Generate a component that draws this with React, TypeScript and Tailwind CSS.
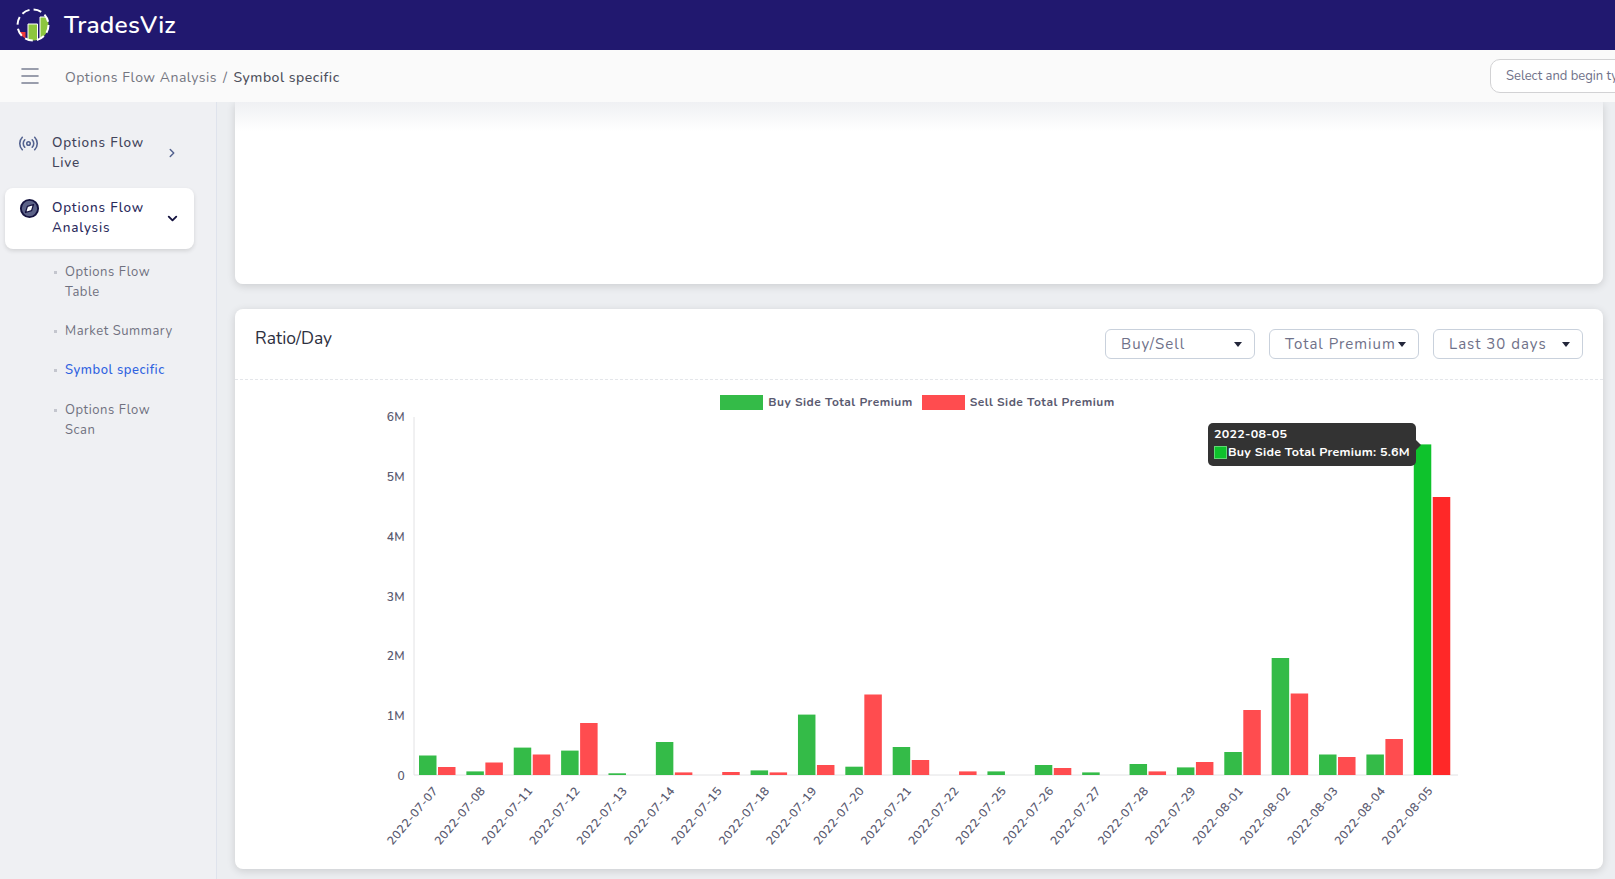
import { ChevronDown, ChevronRight, Menu, Radio } from "lucide-react";

const BASE_Y = 365;
const AXIS_X = 179;
const STEP_X = 47.37;

const rows: [string, number, number][] = [
  ["2022-07-07", 19.5, 8],
  ["2022-07-08", 3.6, 12.5],
  ["2022-07-11", 27.4, 20.5],
  ["2022-07-12", 24.4, 52],
  ["2022-07-13", 1.7, 0],
  ["2022-07-14", 33, 2.6],
  ["2022-07-15", 0, 3],
  ["2022-07-18", 4.6, 2.6],
  ["2022-07-19", 60.4, 10],
  ["2022-07-20", 8.3, 80.5],
  ["2022-07-21", 28, 15],
  ["2022-07-22", 0, 3.6],
  ["2022-07-25", 3.6, 0],
  ["2022-07-26", 10, 7],
  ["2022-07-27", 2.6, 0],
  ["2022-07-28", 11, 3.6],
  ["2022-07-29", 7.6, 13],
  ["2022-08-01", 23, 65],
  ["2022-08-02", 117, 81.5],
  ["2022-08-03", 20.5, 18],
  ["2022-08-04", 20.5, 36],
  ["2022-08-05", 330.6, 278],
];

const ticks = ["0", "1M", "2M", "3M", "4M", "5M", "6M"];

const font = { fontFamily: 'Nunito, Lato, "Noto Sans", sans-serif' };

const Logo = () => (
  <svg width="36" height="36" viewBox="0 0 36 36" className="shrink-0">
    <defs>
      <clipPath id="logo-clip">
        <circle cx="17" cy="18" r="15.5" />
      </clipPath>
    </defs>
    <g clipPath="url(#logo-clip)">
      <path d="M3 25h6.5v10H3z" fill="#ee3b3b" />
      <path d="M12 17h9.5v18H12z" fill="#8dc63f" stroke="#fff" strokeWidth="1" />
      <path d="M24 10h12v25H24z" fill="#8dc63f" stroke="#fff" strokeWidth="1" />
    </g>
    <circle cx="17" cy="18" r="15.5" fill="none" stroke="#fff" strokeWidth="2" strokeDasharray="8 4.2" />
  </svg>
);

const CompassIcon = () => (
  <svg width="21" height="21" viewBox="0 0 20 20" className="shrink-0">
    <circle cx="10" cy="10" r="8.2" fill="#5c6288" stroke="#14123f" strokeWidth="1.8" />
    <path d="M13.8 6.2l-1.8 5.8-5.8 1.8 1.8-5.8z" fill="#fff" stroke="#14123f" strokeWidth="1.2" strokeLinejoin="round" />
  </svg>
);

const Caret = () => (
  <span className="w-0 h-0 border-x-[4px] border-x-transparent border-t-[5px] border-t-[#23263a]" />
);

const Dropdown = ({ label }: { label: string }) => (
  <div className="h-[30px] w-[150px] flex items-center justify-between pl-[15px] pr-[12px] border border-[#c9d1dc] rounded-md text-[15px] tracking-[1px] text-[#6f7189] bg-white">
    <span className="whitespace-nowrap">{label}</span>
    <Caret />
  </div>
);

const SubItem = ({ label, active }: { label: string; active?: boolean }) => (
  <div className="flex pl-[54px] py-[9.7px]">
    <span className="w-[3px] h-[3px] mt-[9px] bg-[#c4c6ce] shrink-0" />
    <span
      className={`ml-2 w-[112px] text-[13px] leading-[20px] tracking-[0.55px] ${
        active ? "text-[#2e62e0] font-medium" : "text-[#6f7180]"
      }`}
    >
      {label}
    </span>
  </div>
);

const Chart = () => (
  <svg width="1368" height="460" className="block" style={font}>
    <line x1={AXIS_X} y1="7" x2={AXIS_X} y2={BASE_Y} stroke="#e2e2e4" />
    <line x1={AXIS_X} y1={BASE_Y} x2={AXIS_X + 1044} y2={BASE_Y} stroke="#e2e2e4" />
    {ticks.map((t, i) => (
      <text
        key={t}
        x="170"
        y={BASE_Y - i * 59.7 + 4.6}
        textAnchor="end"
        fontSize="12"
        fontWeight="600"
        letterSpacing="0.4"
        fill="#5a5a70"
      >
        {t}
      </text>
    ))}
    {rows.map(([date, buy, sell], i) => {
      const left = AXIS_X + 5 + i * STEP_X;
      const last = i === rows.length - 1;
      return (
        <g key={date}>
          {buy > 0 && (
            <rect x={left} y={BASE_Y - buy} width="17.5" height={buy} fill={last ? "#0ec22c" : "#34bb48"} />
          )}
          {sell > 0 && (
            <rect x={left + 19} y={BASE_Y - sell} width="17.5" height={sell} fill={last ? "#ff2828" : "#ff4c4f"} />
          )}
          <text
            transform={`translate(${left + 19.5} ${BASE_Y + 16}) rotate(-50)`}
            textAnchor="end"
            fontSize="12"
            fontWeight="600"
            letterSpacing="0.35"
            fill="#5a5a70"
          >
            {date}
          </text>
        </g>
      );
    })}
  </svg>
);

export default function App() {
  return (
    <div className="h-screen w-full flex flex-col overflow-hidden bg-[#eceef1]" style={font}>
      <div className="h-[50px] shrink-0 bg-[#21186f] flex items-center pl-[16px]">
        <Logo />
        <span className="ml-[12px] text-[24.5px] font-semibold text-white tracking-[0.2px]">TradesViz</span>
      </div>

      <div className="h-[52px] shrink-0 bg-[#fafafa] flex items-center pl-[18px] text-[14px] tracking-[0.5px] z-10">
        <Menu size={24} strokeWidth={1.6} className="text-[#7a7f92]" />
        <span className="ml-[23px] mt-[2px] text-[#73757f]">Options Flow Analysis</span>
        <span className="mx-[6px] mt-[2px] text-[#73757f]">/</span>
        <span className="mt-[2px] text-[#4d505c] font-medium">Symbol specific</span>
        <div className="ml-auto mr-[-60px] w-[185px] h-[34px] shrink-0 flex items-center pl-[15px] bg-white border border-[#d2d2d4] rounded-[10px] text-[13px] tracking-[0px] text-[#6f7189] whitespace-nowrap">
          <span className="mt-[1px]">Select and begin typing</span>
        </div>
      </div>

      <div className="flex-1 flex min-h-0">
        <aside className="w-[217px] shrink-0 bg-[#eff0f3] border-r border-[#dfe3ec] pt-[31px]">
          <div className="flex items-center pl-[18px] pr-[37px] h-[40px] text-[13.5px] leading-[20px] tracking-[0.8px] text-[#42445a]">
            <Radio size={21} strokeWidth={1.8} className="text-[#53628f] shrink-0 -mt-5" />
            <span className="ml-[13px] w-[95px] font-medium">Options Flow Live</span>
            <ChevronRight size={14} strokeWidth={2.5} className="ml-auto text-[#53628f]" />
          </div>
          <div className="mt-[15px] mx-[5px] w-[189px] h-[61px] bg-white rounded-lg shadow-[0_2px_4px_rgba(0,0,0,0.12)] flex items-center pl-[14px] pr-[14px] text-[13.5px] leading-[20px] tracking-[0.8px] text-[#2b2b5c]">
            <span className="-mt-5">
              <CompassIcon />
            </span>
            <span className="ml-[12px] w-[95px] font-medium -mt-[1px]">Options Flow Analysis</span>
            <ChevronDown size={15} strokeWidth={3} className="ml-auto text-[#14123f]" />
          </div>
          <div className="mt-[3px]">
            <SubItem label="Options Flow Table" />
            <SubItem label="Market Summary" />
            <SubItem label="Symbol specific" active />
            <SubItem label="Options Flow Scan" />
          </div>
        </aside>

        <main className="flex-1 min-w-0 pl-[18px] pr-[12px] flex flex-col gap-[25px]">
          <div className="h-[182px] shrink-0 rounded-b-lg bg-gradient-to-b from-[#eff0f3] to-white to-[16%] shadow-[0_2px_8px_rgba(0,0,0,0.14)]" />

          <div className="h-[560px] shrink-0 bg-white rounded-lg shadow-[0_2px_8px_rgba(0,0,0,0.14)] flex flex-col">
            <div className="h-[71px] shrink-0 flex justify-between pl-[20px] pr-[20px] pt-[20px] border-b border-dashed border-[#e4e6ea]">
              <h3 className="text-[17.5px] leading-[20px] -mt-[1px] text-[#2e3040]">Ratio/Day</h3>
              <div className="flex gap-[14px] h-[30px]">
                <Dropdown label="Buy/Sell" />
                <Dropdown label="Total Premium" />
                <Dropdown label="Last 30 days" />
              </div>
            </div>

            <div className="relative flex-1">
              <div className="flex justify-center items-center h-[16px] mt-[14px] ml-[-3px] text-[12px] font-bold tracking-[0.48px] text-[#5a5a70]">
                <span className="w-[43px] h-[15px] bg-[#34bb48]" />
                <span className="ml-[5px]">Buy Side Total Premium</span>
                <span className="ml-[9px] w-[43px] h-[15px] bg-[#ff4c4f]" />
                <span className="ml-[5px]">Sell Side Total Premium</span>
              </div>
              <Chart />

              <div className="absolute left-[973px] top-[43px] w-[208px] h-[43px] bg-[#333333] rounded-[5px] px-[6px] pt-[2px] text-[12.5px] leading-[18px] font-bold tracking-[0.25px] text-white">
                <div>2022-08-05</div>
                <div className="flex items-center whitespace-nowrap">
                  <span className="w-[13px] h-[13px] mr-[1px] bg-[#0ec22c] border border-[#5fd873] shrink-0" />
                  Buy Side Total Premium: 5.6M
                </div>
                <span className="absolute right-[-5px] top-[17px] w-0 h-0 border-y-[5px] border-y-transparent border-l-[5px] border-l-[#333333]" />
              </div>
            </div>
          </div>
        </main>
      </div>
    </div>
  );
}
